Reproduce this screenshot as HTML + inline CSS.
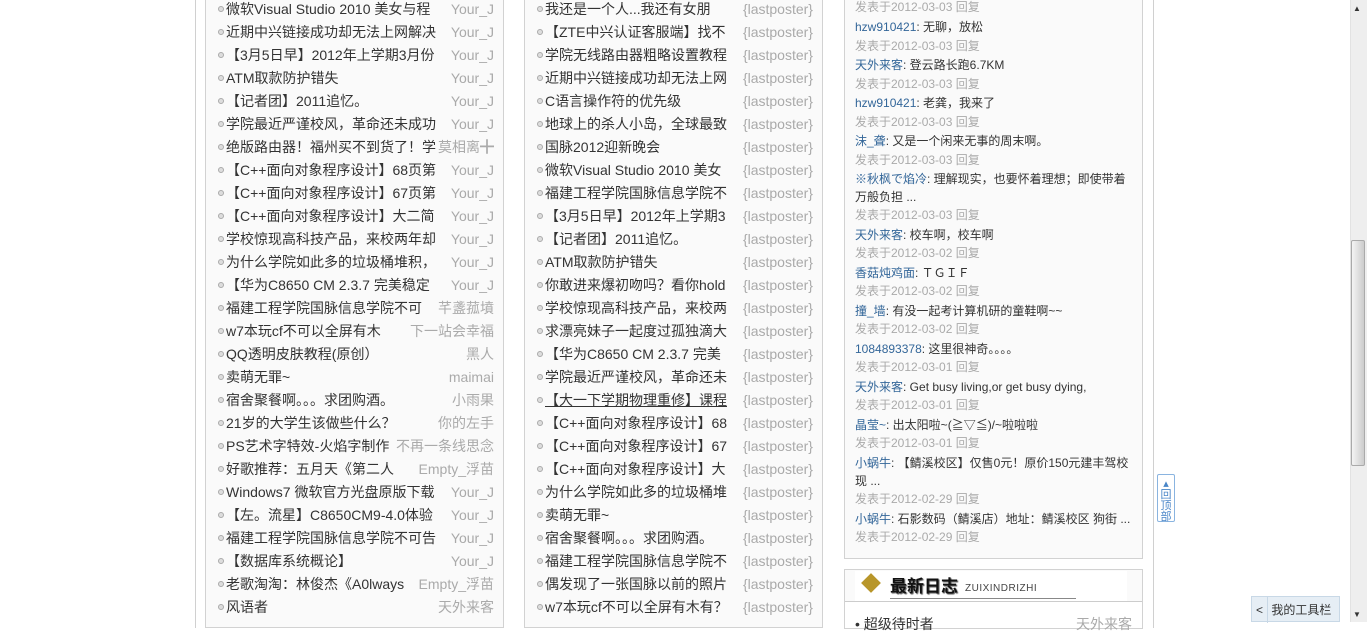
<!DOCTYPE html>
<html><head><meta charset="utf-8"><style>
*{margin:0;padding:0;box-sizing:border-box}
body{width:1367px;height:622px;overflow:hidden;background:#fff;font-family:"Liberation Sans","Noto Sans CJK SC","WenQuanYi Zen Hei",sans-serif;position:relative}
.outer{position:absolute;left:195px;top:-2px;width:959px;height:630px;border-left:1px solid #d0d0d0;border-right:1px solid #d0d0d0;background:#fff}
.panel{position:absolute;top:-2px;height:630px;background:#fafafa;border:1px solid #d2d2d2}
.row{position:absolute;left:0;height:23px;line-height:23px;font-size:14px;color:#333;white-space:nowrap}
.row .b{position:absolute;left:12px;top:8px;width:6px;height:6px;border-radius:50%;border:1px solid #aaa;background:#ddd}
.row .t{position:absolute;left:20px;top:0;overflow:hidden}
.row .a{position:absolute;right:9px;top:0;color:#aaa}
.c{position:absolute;left:10px;font-size:12px;line-height:19px;color:#333;white-space:nowrap}
.c .n{color:#336699}
.d{color:#aaa}
</style></head><body>
<div class="outer"></div>
<div class="panel" style="left:205px;width:299px" id="p1"></div>
<div class="panel" style="left:524px;width:299px" id="p2"></div>
<div class="panel" style="left:844px;top:-2px;height:561px;width:299px" id="p3"></div>
<div class="panel" style="left:844px;top:569px;height:60px;width:299px;background:#fff">
 <div style="position:absolute;left:0;top:0;width:297px;height:32px;border-bottom:1px solid #ccc;background:#fafafa"></div>
 <div style="position:absolute;left:10px;top:1px;width:272px;height:30px;background:#fff"></div>
 <div style="position:absolute;left:19px;top:6px;width:14px;height:14px;background:#b8962a;transform:rotate(45deg)"></div>
 <div style="position:absolute;left:45px;top:2px;font-size:17px;font-weight:bold;color:#111;text-shadow:1px 1px 1px #555">最新日志</div>
 <div style="position:absolute;left:120px;top:13px;font-size:10px;color:#444;letter-spacing:0.5px">ZUIXINDRIZHI</div>
 <div style="position:absolute;left:45px;top:28px;width:186px;border-top:1px solid #888"></div>
 <div style="position:absolute;left:10px;top:44px;font-size:14px;color:#333">• 超级待时者</div>
 <div style="position:absolute;right:10px;top:44px;font-size:14px;color:#aaa">天外来客</div>
</div>
<div style="position:absolute;left:1157px;top:474px;width:18px;height:48px;border:1px solid #8ab4e0;border-radius:2px;background:#fff;color:#4a86c8;font-size:11px;line-height:11px;text-align:center;padding-top:4px">▴<br>回<br>顶<br>部</div>
<div style="position:absolute;left:1251px;top:596px;width:89px;height:26px;background:#e6eef5;border:1px solid #c8d8e6;font-size:12px;line-height:26px;color:#333"><span style="display:inline-block;width:16px;text-align:center;border-right:1px solid #c8d8e6">&lt;</span> 我的工具栏</div>
<div style="position:absolute;left:1350px;top:0;width:17px;height:622px;background:#eee;border-left:1px solid #e2e2e2"></div>
<div style="position:absolute;left:1351px;top:240px;width:14px;height:226px;background:linear-gradient(90deg,#f4f4f4,#ccc);border:1px solid #aaa;border-radius:2px"></div>
<div style="position:absolute;left:1353px;top:4px;font-size:8px;color:#333">▲</div>
<div style="position:absolute;left:1353px;top:610px;font-size:8px;color:#333">▼</div>
<script>
var c1=[["微软Visual Studio 2010 美女与程","Your_J"],["近期中兴链接成功却无法上网解决","Your_J"],["【3月5日早】2012年上学期3月份","Your_J"],["ATM取款防护错失","Your_J"],["【记者团】2011追忆。","Your_J"],["学院最近严谨校风，革命还未成功","Your_J"],["绝版路由器！福州买不到货了！学","莫相离╋"],["【C++面向对象程序设计】68页第","Your_J"],["【C++面向对象程序设计】67页第","Your_J"],["【C++面向对象程序设计】大二简","Your_J"],["学校惊现高科技产品，来校两年却","Your_J"],["为什么学院如此多的垃圾桶堆积，","Your_J"],["【华为C8650 CM 2.3.7 完美稳定","Your_J"],["福建工程学院国脉信息学院不可","芊盞菰墳"],["w7本玩cf不可以全屏有木","下一站会幸福"],["QQ透明皮肤教程(原创）","黑人"],["卖萌无罪~","maimai"],["宿舍聚餐啊。。。求团购酒。","小雨果"],["21岁的大学生该做些什么？","你的左手"],["PS艺术字特效-火焰字制作","不再一条线思念"],["好歌推荐：五月天《第二人","Empty_浮苗"],["Windows7 微软官方光盘原版下载","Your_J"],["【左。流星】C8650CM9-4.0体验","Your_J"],["福建工程学院国脉信息学院不可告","Your_J"],["【数据库系统概论】","Your_J"],["老歌淘淘：林俊杰《A0lways","Empty_浮苗"],["风语者","天外来客"]];
var c2=["我还是一个人...我还有女朋","【ZTE中兴认证客服端】找不","学院无线路由器粗略设置教程","近期中兴链接成功却无法上网","C语言操作符的优先级","地球上的杀人小岛，全球最致","国脉2012迎新晚会","微软Visual Studio 2010 美女","福建工程学院国脉信息学院不","【3月5日早】2012年上学期3","【记者团】2011追忆。","ATM取款防护错失","你敢进来爆初吻吗？看你hold","学校惊现高科技产品，来校两","求漂亮妹子一起度过孤独滴大","【华为C8650 CM 2.3.7 完美","学院最近严谨校风，革命还未","【大一下学期物理重修】课程","【C++面向对象程序设计】68","【C++面向对象程序设计】67","【C++面向对象程序设计】大","为什么学院如此多的垃圾桶堆","卖萌无罪~","宿舍聚餐啊。。。求团购酒。","福建工程学院国脉信息学院不","偶发现了一张国脉以前的照片","w7本玩cf不可以全屏有木有？"];
function rows(id,arr,tw){var p=document.getElementById(id),h="";for(var i=0;i<arr.length;i++){var t=arr[i][0],a=arr[i][1];var u=(id=="p2"&&i==17)?"text-decoration:underline;":"";h+='<div class="row" style="top:'+(23*i-1)+'px;width:297px"><span class="b"></span><span class="t" style="width:'+tw+'px;'+u+'">'+t+'</span><span class="a">'+a+'</span></div>';}p.innerHTML=h;}
rows("p1",c1,214);
rows("p2",c2.map(function(x){return[x,"{lastposter}"]}),204);
var c3=[["d","发表于2012-03-03 回复"],["c","hzw910421","无聊，放松"],["d","发表于2012-03-03 回复"],["c","天外来客","登云路长跑6.7KM"],["d","发表于2012-03-03 回复"],["c","hzw910421","老龚，我来了"],["d","发表于2012-03-03 回复"],["c","沫_聋","又是一个闲来无事的周末啊。"],["d","发表于2012-03-03 回复"],["c","※秋枫で焰冷","理解现实，也要怀着理想；即使带着"],["x","万般负担 ..."],["d","发表于2012-03-03 回复"],["c","天外来客","校车啊，校车啊"],["d","发表于2012-03-02 回复"],["c","香菇炖鸡面","ＴＧＩＦ"],["d","发表于2012-03-02 回复"],["c","撞_墙","有没一起考计算机研的童鞋啊~~"],["d","发表于2012-03-02 回复"],["c","1084893378","这里很神奇。。。。"],["d","发表于2012-03-01 回复"],["c","天外来客","Get busy living,or get busy dying,"],["d","发表于2012-03-01 回复"],["c","晶莹~","出太阳啦~(≧▽≦)/~啦啦啦"],["d","发表于2012-03-01 回复"],["c","小蜗牛","【鲭溪校区】仅售0元！原价150元建丰驾校"],["x","现 ..."],["d","发表于2012-02-29 回复"],["c","小蜗牛","石影数码（鲭溪店）地址：鲭溪校区 狗街 ..."],["d","发表于2012-02-29 回复"]];
var ys=[7,27,46,65,84,103,122,141,160,179,197,215,235,253,273,291,311,329,349,367,387,405,425,443,463,481,499,519,537];
var hh="";for(var i=0;i<c3.length;i++){var r=c3[i],ty=ys[i]-8;var inner=r[0]=="d"?'<span class="d">'+r[1]+'</span>':r[0]=="x"?r[1]:'<span class="n">'+r[1]+'</span>: '+r[2];hh+='<div class="c" style="top:'+ty+'px">'+inner+'</div>';}
document.getElementById("p3").innerHTML=hh;
</script>
</body></html>
